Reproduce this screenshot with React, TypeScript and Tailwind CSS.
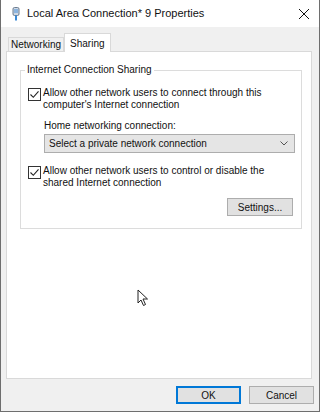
const ui = { fontFamily: '"Liberation Sans", Arial, sans-serif' };

function Check() {
  return (
    <span className="flex h-[13px] w-[13px] shrink-0 items-center justify-center border border-[#333] bg-white">
      <svg width="11" height="11" viewBox="0 0 11 11">
        <path d="M1.5 5.5 L4.3 8.3 L9.5 2.3" fill="none" stroke="#222" strokeWidth="1.1" />
      </svg>
    </span>
  );
}

function Btn({ label, primary }: { label: string; primary?: boolean }) {
  return (
    <div
      className={
        "flex h-[18px] w-[65px] items-center justify-center bg-[#e1e1e1] text-[10px] text-[#111] " +
        (primary ? "border-2 border-[#0078d7]" : "border border-[#adadad]")
      }
    >
      {label}
    </div>
  );
}

export default function App() {
  return (
    <div
      style={ui}
      className="relative flex h-[412px] w-[320px] flex-col border-x border-b border-[#6e6e6e] bg-[#f0f0f0] text-[#111]"
    >
      {/* title bar */}
      <div className="flex h-[27px] items-center bg-white pl-[11px] pr-[9px]">
        <svg width="8" height="14" viewBox="0 0 8 14">
          <rect x="1" y="0.5" width="6" height="8" rx="1.5" fill="#cfd8e3" stroke="#6b7c90" />
          <rect x="2.5" y="2" width="1" height="4" fill="#4a90d9" />
          <rect x="4.5" y="2" width="1" height="4" fill="#4a90d9" />
          <rect x="3" y="8.5" width="2" height="5" fill="#3a8ad6" />
        </svg>
        <span className="ml-[7px] text-[11px]">Local Area Connection* 9 Properties</span>
        <svg className="ml-auto" width="12" height="12" viewBox="0 0 12 12">
          <path d="M1 1 L11 11 M11 1 L1 11" stroke="#111" strokeWidth="1" />
        </svg>
      </div>

      {/* tabs */}
      <div className="mt-[6px] flex items-end pl-[7px]">
        <div className="-mr-[1px] flex h-[14px] items-center border border-b-0 border-[#d9d9d9] bg-[#f0f0f0] px-[2px] text-[10px]">
          Networking
        </div>
        <div className="relative z-10 -mb-[1px] ml-[1px] flex h-[19px] items-center border border-b-0 border-[#d9d9d9] bg-white px-[5px] text-[10px]">
          Sharing
        </div>
      </div>

      {/* panel */}
      <div className="ml-[5px] h-[328px] w-[306px] border border-[#d9d9d9] bg-white pl-[13px] pt-[18px]">
        <div className="relative h-[159px] w-[282px] border border-[#dcdcdc] pl-[7px] pt-[16px]">
          <span className="absolute -top-[8px] left-[4px] bg-white px-[2px] text-[10px] leading-[14px]">
            Internet Connection Sharing
          </span>
          <div className="flex items-start gap-[2px]">
            <div className="mt-[1px]">
              <Check />
            </div>
            <p className="text-[10px] leading-[12px]">
              Allow other network users to connect through this
              <br />
              computer's Internet connection
            </p>
          </div>
          <p className="ml-[16px] mt-[8px] text-[10px] leading-[13px]">Home networking connection:</p>
          <div className="ml-[16px] mt-[2px] flex h-[19px] w-[251px] items-center justify-between border border-[#adadad] bg-[#e5e5e5] pl-[4px] pr-[6px] text-[10px]">
            <span>Select a private network connection</span>
            <svg width="8" height="5" viewBox="0 0 8 5">
              <path d="M0.5 0.5 L4 4 L7.5 0.5" fill="none" stroke="#555" />
            </svg>
          </div>
          <div className="mt-[12px] flex items-start gap-[2px]">
            <div className="mt-[1px]">
              <Check />
            </div>
            <p className="text-[10px] leading-[12px]">
              Allow other network users to control or disable the
              <br />
              shared Internet connection
            </p>
          </div>
          <div className="mr-[8px] mt-[9px] flex justify-end">
            <div className="flex h-[18px] w-[66px] items-center justify-center border border-[#adadad] bg-[#e1e1e1] text-[10px]">
              Settings...
            </div>
          </div>
        </div>
      </div>

      {/* footer */}
      <div className="mt-[7px] flex justify-end gap-[8px] pr-[5px]">
        <Btn label="OK" primary />
        <Btn label="Cancel" />
      </div>

      {/* mouse pointer */}
      <svg className="absolute left-[136px] top-[289px]" width="12" height="18" viewBox="0 0 12 18">
        <path d="M1 1 L1 14 L4 11 L6.5 16.5 L8.5 15.5 L6 10 L10.5 10 Z" fill="#fff" stroke="#222" strokeWidth="1" strokeLinejoin="round" />
      </svg>
    </div>
  );
}
